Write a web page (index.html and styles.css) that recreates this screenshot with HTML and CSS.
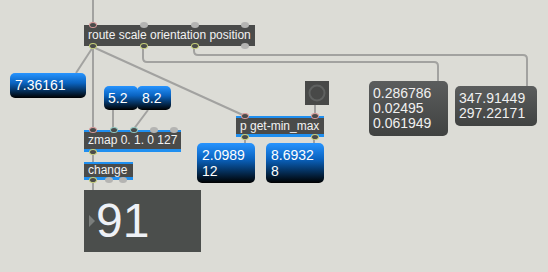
FILE: index.html
```html
<!DOCTYPE html>
<html>
<head>
    <meta charset="UTF-8">
    <title>Patcher</title>
    <link rel="stylesheet" href="styles.css">
</head>
<body>
    <div class="patcher">
        <!-- patch cords -->
        <svg class="cords" width="548" height="272" viewBox="0 0 548 272">
            <path d="M93 0 V25"/>
            <path d="M93 46 V130"/>
            <path d="M93 47 L76 73"/>
            <path d="M93 47 L245 116"/>
            <path d="M143 46 V58 Q143 62 147 62 H434 Q438 62 438 66 V81"/>
            <path d="M194 46 V51 Q194 55 198 55 H523 Q527 55 527 59 V86"/>
            <path d="M113 110 V130"/>
            <path d="M148 110 L133 130"/>
            <path d="M93 152 V162"/>
            <path d="M93 180 V190"/>
            <path d="M315 105 V116"/>
            <path d="M245 137 V143"/>
            <path d="M314 137 V143"/>
        </svg>

        <div class="obj route">
            <span class="port in on"></span><span class="port in" style="left: 56px"></span><span class="port in" style="left: 107px"></span><span class="port in" style="left: 157px"></span>
            route scale orientation position
            <span class="port out on"></span><span class="port out on" style="left: 56px"></span><span class="port out on" style="left: 107px"></span><span class="port out" style="left: 157px"></span>
        </div>

        <div class="num n-single">7.36161</div>
        <div class="num n-a">5.2</div>
        <div class="num n-b">8.2</div>

        <div class="obj sel zmap">
            <span class="port in on"></span><span class="port in on2" style="left: 26px"></span><span class="port in on2" style="left: 46px"></span><span class="port in" style="left: 66px"></span><span class="port in" style="left: 86px"></span>
            zmap 0. 1. 0 127
            <span class="port out on"></span>
        </div>

        <div class="obj sel change">
            change
            <span class="port out on"></span><span class="port out" style="left: 21px"></span><span class="port out" style="left: 35px"></span>
        </div>

        <div class="flonum">
            <span class="arrow"></span>91
        </div>

        <div class="obj sel getminmax">
            <span class="port in on"></span><span class="port in on" style="left: 75px"></span>
            p get-min_max
            <span class="port out on"></span><span class="port out on" style="left: 75px"></span>
        </div>

        <div class="bang">
            <svg width="24" height="24" viewBox="0 0 24 24">
                <circle cx="12" cy="12" r="7.5" fill="none" stroke="#5f6160" stroke-width="2"/>
            </svg>
        </div>

        <div class="num multi n-min">2.0989<br>12</div>
        <div class="num multi n-max">8.6932<br>8</div>

        <div class="msg m-orient">0.286786<br>0.02495<br>0.061949</div>
        <div class="msg m-pos">347.91449<br>297.22171</div>
    </div>
</body>
</html>
```

FILE: styles.css
```css
body {
    margin: 0;
    background-color: #dcdcd6;
    font-family: "Liberation Sans", Arial, sans-serif;
}

.patcher {
    position: relative;
    width: 548px;
    height: 272px;
    overflow: hidden;
}

.cords {
    position: absolute;
    left: 0;
    top: 0;
}

.cords path {
    fill: none;
    stroke: #a2a2a0;
    stroke-width: 2;
}

/* object boxes */
.obj {
    position: absolute;
    box-sizing: border-box;
    background-color: #4a4b4a;
    color: #f2f2f2;
    font-size: 12px;
    padding-left: 4px;
    white-space: nowrap;
}

.obj.sel {
    border-top: 2px solid #1f8ff0;
    border-bottom: 3px solid #1f8ff0;
}

.route {
    left: 84px;
    top: 25px;
    width: 171px;
    height: 21px;
    line-height: 21px;
}

.zmap {
    left: 84px;
    top: 130px;
    width: 97px;
    height: 22px;
    line-height: 17px;
}

.change {
    left: 84px;
    top: 162px;
    width: 49px;
    height: 18px;
    line-height: 13px;
}

.getminmax {
    left: 236px;
    top: 116px;
    width: 88px;
    height: 21px;
    line-height: 16px;
}

.port {
    position: absolute;
    left: 5px;
    width: 8px;
    height: 6px;
    border-radius: 50%;
    background-color: #b4b4b2;
    box-sizing: border-box;
}

.port.in {
    top: -3px;
}

.port.out {
    bottom: -3px;
}

.sel .port.in {
    top: -5px;
}

.sel .port.out {
    bottom: -6px;
}

.port.in.on {
    background-color: #4a4b4a;
    border: 1.5px solid #d89a9a;
}

.port.in.on2 {
    background-color: #4a4b4a;
    border: 1.5px solid #8fc7c0;
}

.port.out.on {
    background-color: #4a4b4a;
    border: 1.5px solid #c6d07a;
}

/* number boxes */
.num {
    position: absolute;
    box-sizing: border-box;
    color: #ffffff;
    font-size: 14px;
    line-height: 25px;
    padding-left: 5px;
    border-radius: 5px;
    background: linear-gradient(#2794ff, #0a63c0 40%, #03213f 80%, #000000);
}

.n-single {
    left: 10px;
    top: 73px;
    width: 76px;
    height: 25px;
}

.n-a {
    left: 104px;
    top: 86px;
    width: 34px;
    height: 24px;
    line-height: 24px;
    padding-left: 4px;
}

.n-b {
    left: 137px;
    top: 86px;
    width: 34px;
    height: 24px;
    line-height: 24px;
    padding-left: 5px;
}

.num.multi {
    top: 143px;
    width: 58px;
    height: 40px;
    line-height: 16px;
    padding-top: 4px;
}

.n-min {
    left: 197px;
}

.n-max {
    left: 266px;
}

/* big number display */
.flonum {
    position: absolute;
    left: 84px;
    top: 190px;
    width: 117px;
    height: 62px;
    box-sizing: border-box;
    background-color: #4b4e4c;
    color: #eef1f6;
    font-size: 48px;
    line-height: 62px;
    padding-left: 12px;
}

.arrow {
    position: absolute;
    left: 5px;
    top: 25px;
    width: 0;
    height: 0;
    border-top: 6px solid transparent;
    border-bottom: 6px solid transparent;
    border-left: 6px solid #7b7e7c;
}

.bang {
    position: absolute;
    left: 305px;
    top: 81px;
    width: 24px;
    height: 24px;
    background-color: #484948;
}

.bang svg {
    display: block;
}

/* message style boxes */
.msg {
    position: absolute;
    box-sizing: border-box;
    color: #f0f0f0;
    font-size: 14px;
    line-height: 15px;
    padding: 5px 4px;
    border-radius: 5px;
    background: linear-gradient(#5b5d5d, #404241);
}

.m-orient {
    left: 369px;
    top: 81px;
    width: 79px;
    height: 55px;
}

.m-pos {
    left: 455px;
    top: 86px;
    width: 82px;
    height: 40px;
}
```
